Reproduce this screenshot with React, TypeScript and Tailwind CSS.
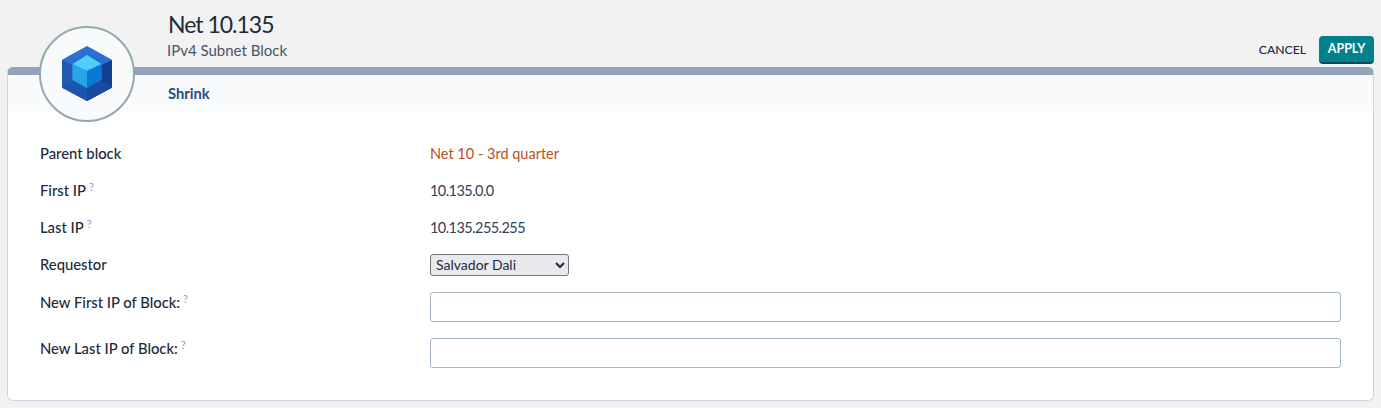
const Hint = () => (
  <span className="relative -top-[5px] ml-[3px] text-[11px] font-medium leading-none text-[#8fa3bd]">?</span>
);

const Row = ({ label, hint, tall, children }: { label: string; hint?: boolean; tall?: boolean; children: React.ReactNode }) => (
  <div className={`flex ${tall ? "h-[46px]" : "h-[37px]"}`}>
    <div className={`w-[390px] shrink-0 text-[14.8px] font-medium text-[#1e293b] ${tall ? "leading-[38px]" : "leading-[37px]"}`}>
      {label}
      {hint && <Hint />}
    </div>
    <div className="flex-1 leading-[37px]">{children}</div>
  </div>
);

const CubeLogo = () => (
  <svg width="50" height="55" viewBox="0 0 50 55" className="mt-[-1px]">
    <path d="M25 0.5 L49.5 14 V41.5 L25 54.5 L0.5 41.5 V14 Z" fill="#2b6fd0" stroke="#2b6fd0" strokeLinejoin="round" />
    <path d="M0 14 L10.5 19 V34 L25 42 V55 L0 41.5 Z" fill="#1e5ab5" />
    <path d="M50 14 L39.5 19 V34 L25 42 V55 L50 41.5 Z" fill="#123f8f" />
    <path d="M10.5 34 L25 42 V55 L0 41.5 Z" fill="#1c55ad" />
    <path d="M39.5 34 L25 42 V55 L50 41.5 Z" fill="#174aa0" />
    <path d="M25 9 L39.5 18 L25 25 L10.5 18 Z" fill="#4fcdfd" />
    <path d="M10.5 18 L25 25 V42 L10.5 34 Z" fill="#28a4e8" />
    <path d="M39.5 18 L25 25 V42 L39.5 34 Z" fill="#0a78d8" />
  </svg>
);

export default function App() {
  return (
    <div className="relative h-[408px] w-[1381px] overflow-hidden bg-[#f2f2f2] px-[7px] font-['Lato','Open_Sans',sans-serif] text-[14.5px] text-[#334155]">
      {/* header */}
      <div className="flex h-[67px] items-start justify-between pl-[161px]">
        <div>
          <h1 className="mt-[9px] text-[23px] leading-[30px] tracking-[-1px] text-[#1e293b]">Net 10.135</h1>
          <p className="mt-[1px] -ml-px text-[15px] leading-[20px] text-[#475569]">IPv4 Subnet Block</p>
        </div>
        <div className="mt-[36px] flex items-center gap-[13px]">
          <button className="text-[12.2px] font-medium text-[#1e293b]">CANCEL</button>
          <button className="h-[28px] w-[55px] rounded-[4px] border-b-2 border-[#0b4f55] bg-[#00828c] text-[12.5px] font-bold text-white">
            APPLY
          </button>
        </div>
      </div>

      {/* card */}
      <div className="h-[334px] rounded-[6px] border-x border-b border-[#cbd5e1] border-t-[8px] border-t-[#94a3b8] bg-white">
        <div className="h-[36px] bg-[#f8fafc] pl-[160px] text-[14.7px] font-bold leading-[36px] text-[#2a4d7c]">Shrink</div>
        <div className="pl-[32px] pr-[32px] pt-[24px]">
          <Row label="Parent block"><span className="text-[#b9501c]">Net 10 - 3rd quarter</span></Row>
          <Row label="First IP" hint><span className="tracking-[-0.55px]">10.135.0.0</span></Row>
          <Row label="Last IP" hint><span className="tracking-[-0.55px]">10.135.255.255</span></Row>
          <Row label="Requestor">
            <select className="h-[22px] w-[139px] rounded-[3px] border border-[#767680] bg-[#e9e9ed] pl-px font-['Lato',sans-serif] text-[14px] text-[#1e293b]">
              <option>Salvador Dali</option>
            </select>
          </Row>
          <Row label="New First IP of Block:" hint tall>
            <input className="mt-[9px] block h-[30px] w-full rounded-[3px] border border-[#a3b5c6] bg-white" />
          </Row>
          <Row label="New Last IP of Block:" hint tall>
            <input className="mt-[9px] block h-[30px] w-full rounded-[3px] border border-[#a3b5c6] bg-white" />
          </Row>
        </div>
      </div>

      {/* avatar over header and card */}
      <div className="absolute left-[39px] top-[26px] flex h-[96px] w-[96px] items-center justify-center rounded-full border-2 border-[#94a8b0] bg-[#f8fafc]">
        <CubeLogo />
      </div>
    </div>
  );
}
